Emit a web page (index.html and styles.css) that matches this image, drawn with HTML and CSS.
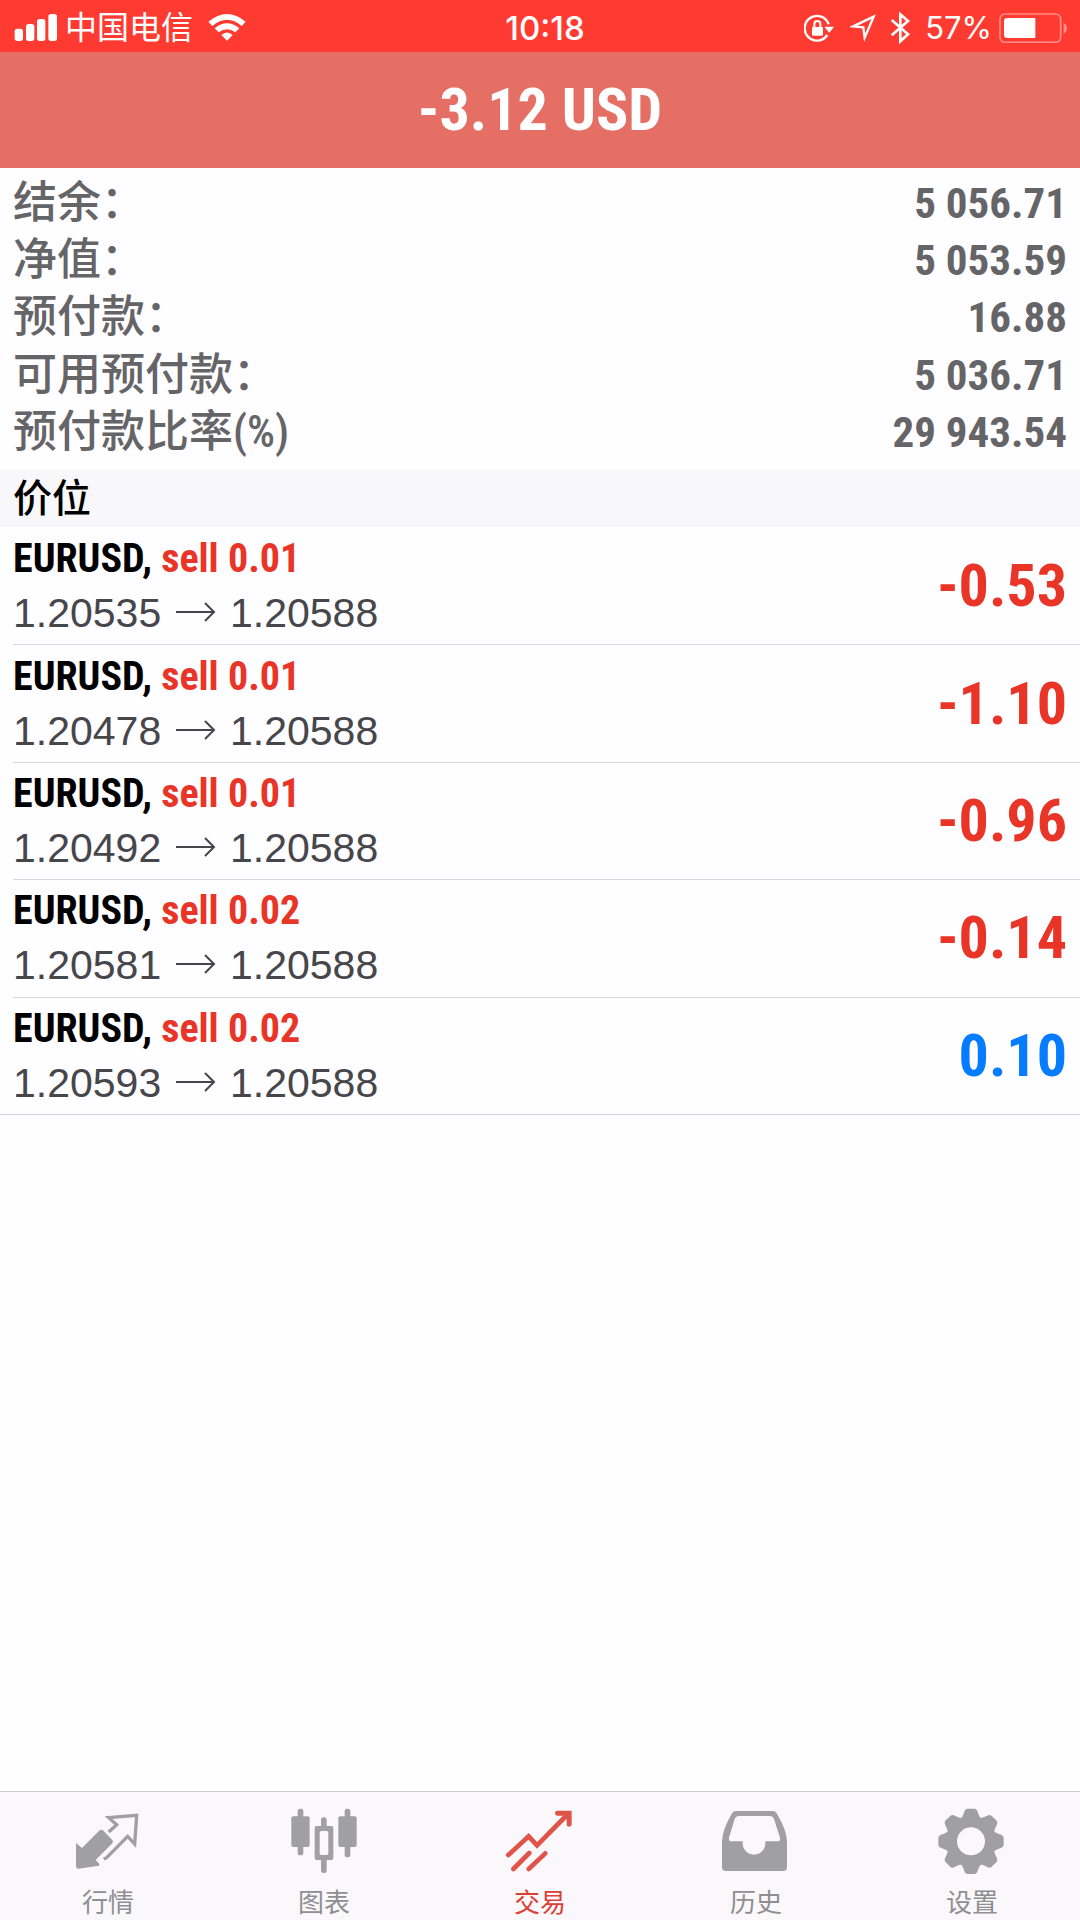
FILE: index.html
```html
<!DOCTYPE html>
<html lang="zh-CN">
<head>
<meta charset="utf-8">
<meta name="viewport" content="width=device-width, initial-scale=1">
<title>交易</title>
<link rel="stylesheet" href="styles.css">
</head>
<body>
<div class="status-bar">
  <div class="status-left">
    <svg class="icon-signal" viewBox="45 36 132 87" aria-hidden="true"><g fill="#fff"><rect x="47" y="83" width="25" height="37" rx="8"/><rect x="81" y="69" width="25" height="51" rx="8"/><rect x="114" y="54" width="25" height="66" rx="8"/><rect x="148" y="39" width="26" height="81" rx="8"/></g></svg>
    <span class="carrier">中国电信</span>
    <svg class="icon-wifi" viewBox="624 36 114 87" aria-hidden="true"><path d="M625 62Q681 16 737 62L725 75Q681 38 637 75ZM644 82Q681 52 718 82L706 94Q681 75 656 94ZM664 102Q681 87 698 102L681 119Z" fill="#fff"/></svg>
  </div>
  <span class="clock">10:18</span>
  <div class="status-right">
    <svg class="icon-lock" viewBox="75 33 90 90" aria-hidden="true"><path d="M145 99A37 37 0 1 1 149 67" fill="none" stroke="#fff" stroke-width="7"/><path d="M136 74H165L151 92Z" fill="#fff"/><rect x="99" y="75" width="33" height="26" rx="3" fill="#fff"/><path d="M106 76V66a9 9 0 0 1 18 0V76" fill="none" stroke="#fff" stroke-width="6"/></svg>
    <svg class="icon-location" viewBox="213 36 78 87" aria-hidden="true"><path d="M284 47L222 76L253 79L257 110Z" fill="none" stroke="#fff" stroke-width="7"/></svg>
    <svg class="icon-bluetooth" viewBox="333 30 60 99" aria-hidden="true"><path d="M338 57L387 100L364 121V40L387 60L338 103" fill="none" stroke="#fff" stroke-width="8"/></svg>
    <span class="battery-level">57%</span>
    <svg class="icon-battery" viewBox="657 33 207 90" aria-hidden="true"><rect x="660" y="36" width="182" height="85" rx="15" fill="none" stroke="#ff8f88" stroke-width="5"/><path d="M681 48H766V108H681Q672 108 672 99V57Q672 48 681 48Z" fill="#fff"/><path d="M851 63Q861 68 861 79T851 95Z" fill="#ff8f88"/></svg>
  </div>
</div>
<header class="total"><h1>-3.12 USD</h1></header>
<main>
  <dl class="summary">
    <div class="summary-row"><dt>结余：</dt><dd>5 056.71</dd></div>
    <div class="summary-row"><dt>净值：</dt><dd>5 053.59</dd></div>
    <div class="summary-row"><dt>预付款：</dt><dd>16.88</dd></div>
    <div class="summary-row"><dt>可用预付款：</dt><dd>5 036.71</dd></div>
    <div class="summary-row"><dt>预付款比率(%)</dt><dd>29 943.54</dd></div>
  </dl>
  <h2 class="section-title">价位</h2>
  <ul class="positions">
    <li class="position"><div><p class="symbol">EURUSD, <span class="side">sell 0.01</span></p><p class="prices">1.20535 <svg class="arrow" viewBox="0 0 40 20" role="img" aria-label="至"><path d="M0 10H38M29 1L38 10L29 19"/></svg> 1.20588</p></div><span class="profit">-0.53</span></li>
    <li class="position"><div><p class="symbol">EURUSD, <span class="side">sell 0.01</span></p><p class="prices">1.20478 <svg class="arrow" viewBox="0 0 40 20" role="img" aria-label="至"><path d="M0 10H38M29 1L38 10L29 19"/></svg> 1.20588</p></div><span class="profit">-1.10</span></li>
    <li class="position"><div><p class="symbol">EURUSD, <span class="side">sell 0.01</span></p><p class="prices">1.20492 <svg class="arrow" viewBox="0 0 40 20" role="img" aria-label="至"><path d="M0 10H38M29 1L38 10L29 19"/></svg> 1.20588</p></div><span class="profit">-0.96</span></li>
    <li class="position"><div><p class="symbol">EURUSD, <span class="side">sell 0.02</span></p><p class="prices">1.20581 <svg class="arrow" viewBox="0 0 40 20" role="img" aria-label="至"><path d="M0 10H38M29 1L38 10L29 19"/></svg> 1.20588</p></div><span class="profit">-0.14</span></li>
    <li class="position"><div><p class="symbol">EURUSD, <span class="side">sell 0.02</span></p><p class="prices">1.20593 <svg class="arrow" viewBox="0 0 40 20" role="img" aria-label="至"><path d="M0 10H38M29 1L38 10L29 19"/></svg> 1.20588</p></div><span class="profit gain">0.10</span></li>
  </ul>
</main>
<nav class="tabs">
  <a class="tab" href="#quotes">
    <svg class="tab-icon" viewBox="216 75 216 216" aria-hidden="true"><path d="M228 189L246 204L299 151Q304 147 309 151L337 180Q341 185 337 190L287 240L299 253L297 257L235 266Q228 266 228 259Z" fill="currentColor"/><path d="M326 156L350 134L326 113L410 106L404 192L383 169L320 233L311 237" fill="none" stroke="currentColor" stroke-width="10"/></svg>
    <span>行情</span></a>
  <a class="tab" href="#chart">
    <svg class="tab-icon" viewBox="864 75 216 216" aria-hidden="true"><g fill="currentColor"><rect x="893" y="86" width="17" height="140" rx="8"/><rect x="874" y="109" width="55" height="92" rx="6"/><rect x="1034" y="86" width="17" height="146" rx="8"/><rect x="1015" y="109" width="55" height="92" rx="6"/><rect x="963" y="112" width="17" height="40" rx="8"/><rect x="963" y="230" width="17" height="49" rx="8"/><path fill-rule="evenodd" d="M950 138H994Q1000 138 1000 144V234Q1000 240 994 240H950Q944 240 944 234V144Q944 138 950 138ZM964 153Q959 153 959 158V220Q959 225 964 225H980Q985 225 985 220V158Q985 153 980 153Z"/></g></svg>
    <span>图表</span></a>
  <a class="tab active" href="#trade" aria-current="page">
    <svg class="tab-icon" viewBox="132 75 216 216" aria-hidden="true"><g fill="none" stroke="currentColor" stroke-width="14" stroke-linecap="round"><path d="M145 225L206 169L231 196L321 105"/><path d="M160 267L208 219M206 267L256 220"/></g><path d="M291 92H335V134Q333 140 327 140Q320 140 320 134V107H291Q285 105 285 99T291 92Z" fill="currentColor"/></svg>
    <span>交易</span></a>
  <a class="tab" href="#history">
    <svg class="tab-icon" viewBox="780 75 216 216" aria-hidden="true"><path fill-rule="evenodd" fill="currentColor" d="M828 93H938Q946 93 950 100Q980 150 981 184V262Q981 273 970 273H797Q786 273 786 262V184Q787 150 816 100Q820 93 828 93ZM837 108Q828 108 824 117L807 173Q805 184 816 184H848V190A34 34 0 0 0 916 190V184H951Q962 184 960 173L942 117Q938 108 929 108Z"/></svg>
    <span>历史</span></a>
  <a class="tab" href="#settings">
    <svg class="tab-icon" viewBox="168 75 216 216" aria-hidden="true"><g fill="currentColor"><path id="cog" d="M237 122Q248 113 251 101Q254 87 262 86H284Q292 87 295 101Q298 113 309 122Z"/><use href="#cog" transform="rotate(45 273 184)"/><use href="#cog" transform="rotate(90 273 184)"/><use href="#cog" transform="rotate(135 273 184)"/><use href="#cog" transform="rotate(180 273 184)"/><use href="#cog" transform="rotate(225 273 184)"/><use href="#cog" transform="rotate(270 273 184)"/><use href="#cog" transform="rotate(315 273 184)"/></g><circle cx="273" cy="184" r="59" fill="none" stroke="currentColor" stroke-width="34"/></svg>
    <span>设置</span></a>
</nav>
</body>
</html>
```
FILE: styles.css
```css
* { box-sizing: border-box; }

body {
  margin: 0;
  min-height: 100vh;
  display: flex;
  flex-direction: column;
  background: #fefdff;
  color: #000;
  font-family: "Roboto Condensed", "Liberation Sans", "Noto Sans CJK SC", sans-serif;
}

h1, h2, p, dl, dd, ul { margin: 0; padding: 0; }

svg { display: block; }

.status-bar {
  display: grid;
  grid-template-columns: 1fr auto 1fr;
  align-items: center;
  height: 52px;
  padding: 3px 4px 0 14px;
  background: #ff3a31;
  color: #fff;
  font-family: Inter, "Noto Sans CJK SC", sans-serif;
  font-size: 32px;
  line-height: 48px;
}

.status-left, .status-right { display: flex; align-items: center; }
.status-right { justify-content: flex-end; padding-right: 8px; }
.carrier { margin: 0 15px 0 7px; }
.clock { font-size: 33px; font-weight: 500; }
.battery-level { margin: 0 7px 0 15px; font-size: 31px; }

.icon-signal { width: 44px; height: 29px; }
.icon-wifi { width: 38px; height: 29px; }
.icon-lock { width: 30px; height: 30px; }
.icon-location { width: 26px; height: 29px; margin: 0 14px 0 16px; }
.icon-bluetooth { width: 20px; height: 33px; }
.icon-battery { width: 69px; height: 30px; }

.total {
  display: flex;
  align-items: center;
  justify-content: center;
  height: 116px;
  background: #e56f65;
  color: #fff;
}
.total h1 { font-size: 60px; line-height: 72px; }

main { flex: 1; }

.summary {
  display: grid;
  grid-auto-rows: 1fr;
  min-height: 302px;
  padding: 6px 13px 9px;
  color: #656467;
  font-size: 44px;
  line-height: 56px;
}
.summary-row { display: flex; justify-content: space-between; align-items: center; }
.summary dt { font-weight: 500; }
.summary dd { font-size: 43px; font-weight: 700; }

.section-title {
  padding: 2px 13px 0;
  background: #f8f7fa;
  font-size: 39px;
  font-weight: 500;
  line-height: 55px;
}

.positions {
  display: grid;
  grid-auto-rows: 1fr;
  min-height: 588px;
  border-bottom: 1px solid #d4d3d7;
  list-style: none;
}
.position {
  display: flex;
  align-items: center;
  justify-content: space-between;
  margin-left: 13px;
  padding-right: 13px;
}
.position + .position { border-top: 1px solid #d8d7db; }

.symbol { font-size: 40px; font-weight: 700; line-height: 54px; }
.side { color: #e93527; }
.prices {
  color: #47464b;
  font-family: "Liberation Sans", sans-serif;
  font-size: 41px;
  line-height: 54px;
}
.arrow {
  display: inline-block;
  width: 40px;
  height: 20px;
  margin: 0 3px;
  vertical-align: 5px;
  fill: none;
  stroke: #47464b;
  stroke-width: 2;
}
.profit { color: #e93527; font-size: 60px; font-weight: 700; line-height: 72px; }
.gain { color: #087cff; }

.tabs {
  display: grid;
  grid-template-columns: repeat(5, 1fr);
  border-top: 1px solid #cbcacd;
  background: #faf8fb;
}
.tab {
  display: flex;
  flex-direction: column;
  align-items: center;
  gap: 4px;
  padding: 13px 0 0;
  color: #a09fa2;
  font-family: "Noto Sans CJK SC", sans-serif;
  font-size: 26px;
  line-height: 39px;
  text-decoration: none;
}
.tab span { color: #8f8e91; }
.tab-icon { width: 72px; height: 72px; }
.active { color: #e0544a; }
.active span { color: #dc4035; }
```
